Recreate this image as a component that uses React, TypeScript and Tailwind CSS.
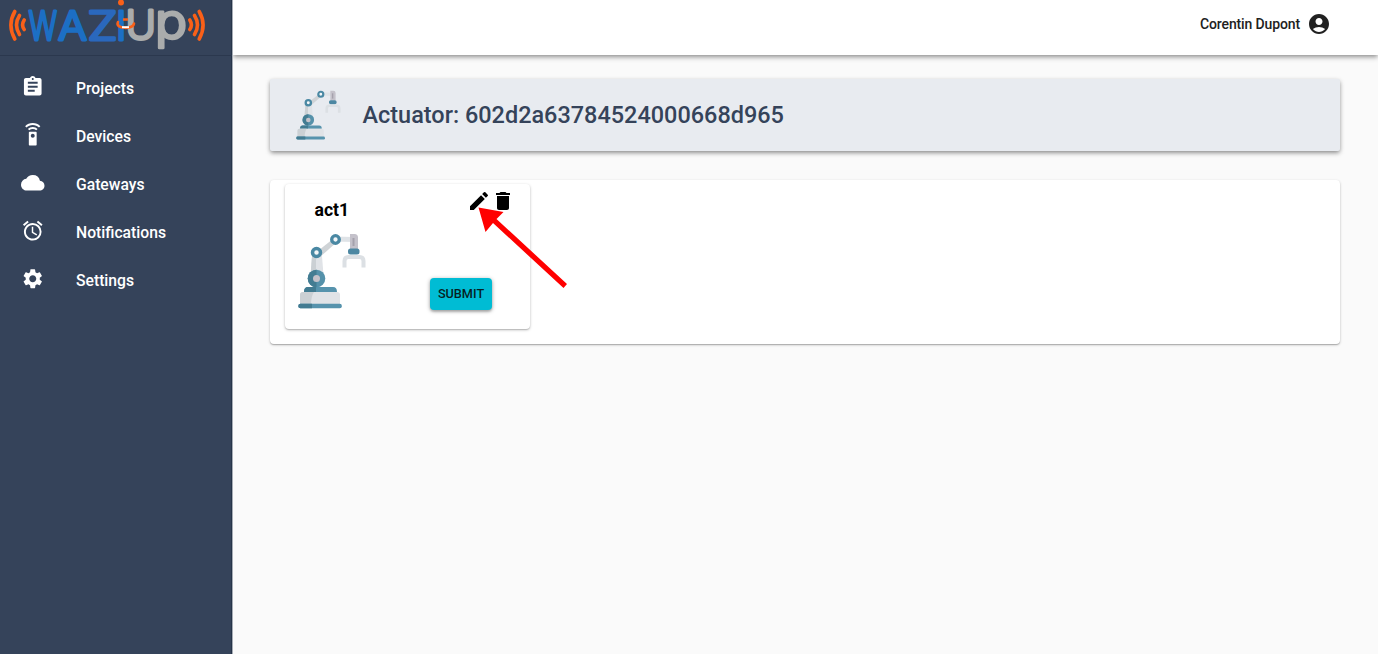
import React from "react";
import {
  MdAccessAlarm,
  MdAccountCircle,
  MdAssignment,
  MdCloud,
  MdDelete,
  MdEdit,
  MdSettings,
  MdSettingsRemote,
} from "react-icons/md";

const navItems = [
  { label: "Projects", Icon: MdAssignment },
  { label: "Devices", Icon: MdSettingsRemote },
  { label: "Gateways", Icon: MdCloud },
  { label: "Notifications", Icon: MdAccessAlarm },
  { label: "Settings", Icon: MdSettings },
];

function Logo() {
  return (
    <svg width="232" height="55" viewBox="0 0 232 55" className="block" role="img" aria-label="Waziup">
      <g fill="none" stroke="#fa6018" strokeWidth="3.6" strokeLinecap="round">
        <path d="M14.8 11.5Q7 25 14.8 39" />
        <path d="M19.5 15.5Q13.5 25 19.5 34.5" />
        <path d="M24.2 20Q21 25 24.2 29.5" />
        <path d="M199.2 11.5Q207 25 199.2 39" />
        <path d="M194.5 15.5Q200.5 25 194.5 34.5" />
        <path d="M189.8 20Q193 25 189.8 29.5" />
      </g>
      <g
        fontFamily="Inter, 'Liberation Sans', sans-serif"
        fontWeight="300"
        strokeWidth="2.8"
        strokeLinejoin="round"
      >
        <g fill="#1c6fc4" stroke="#1c6fc4">
          <text x="28.5" y="39.6" fontSize="39.5" textLength="28.5" lengthAdjust="spacingAndGlyphs">W</text>
          <text x="58" y="39.6" fontSize="39.5" textLength="29" lengthAdjust="spacingAndGlyphs">A</text>
          <text x="87.5" y="39.6" fontSize="39.5" fill="#2a68bd" stroke="#2a68bd" textLength="30" lengthAdjust="spacingAndGlyphs">Z</text>
          <text x="116" y="39.6" fontSize="39.5">I</text>
        </g>
        <g fill="#aaacac" stroke="#aaacac">
          <text x="125.5" y="39.4" fontSize="39.5" textLength="30.5" lengthAdjust="spacingAndGlyphs">U</text>
          <text x="155" y="37.6" fontSize="47" textLength="32" lengthAdjust="spacingAndGlyphs">p</text>
        </g>
      </g>
      <circle cx="121" cy="2.5" r="3" fill="#fa6018" />
      <path d="M118 22C114.500 29 133 30 134 23.5" fill="none" stroke="#fa6018" strokeWidth="2.6" strokeLinecap="round" />
      <path d="M123 19.5h5" stroke="#fa6018" strokeWidth="2.5" />
      <path d="M122 27.2h7" stroke="#fff" strokeWidth="2" />
    </svg>
  );
}

function RobotArm({ className }: { className: string }) {
  return (
    <svg viewBox="0 0 68 76" className={className} aria-hidden="true">
      <path d="M16 21L35 6L39 9L22 24Z" fill="#cfd3d6" />
      <path d="M36 3.5L56 4v5L36 8.5Z" fill="#dfe3e7" />
      <path d="M14 23h10l2 26H12Z" fill="#e0e3e7" />
      <path d="M14 23h4v26h-6Z" fill="#cbd0d4" />
      <path d="M52 1h4.500a3.500 3.500 0 0 1 3.500 3.500V16h-8Z" fill="#c4c1ca" />
      <path d="M54.500 5h2v8h-2Z" fill="#a5a1ac" />
      <rect x="50" y="15.5" width="11.5" height="6" rx="2.5" fill="#4c87a2" />
      <path d="M46.500 34.500V28q0-4 4-4h11q4 0 4 4v6.500" fill="none" stroke="#dce0e4" strokeWidth="4" />
      <circle cx="37.5" cy="6.5" r="3.8" fill="#f4f6f8" stroke="#4a88a3" strokeWidth="3.3" />
      <circle cx="18.5" cy="19.5" r="4" fill="#f4f6f8" stroke="#4a88a3" strokeWidth="3.5" />
      <path d="M6 59q0-5 4-5h25q4 0 4 5Z" fill="#5693ad" />
      <path d="M6 59q0-5 4-5h8v5Z" fill="#427b91" />
      <circle cx="18.5" cy="45.5" r="8.8" fill="#5591aa" />
      <path d="M18.500 36.700a8.800 8.800 0 0 0 0 17.600Z" fill="#437c92" />
      <circle cx="18.5" cy="45.5" r="3.5" fill="#c5c2ca" />
      <path d="M2 72V62q0-3 3-3h34q3 0 3 3v10Z" fill="#e0e3e7" />
      <path d="M2 72V62q0-3 3-3h11q-3 4-3 13Z" fill="#cbd0d4" />
      <rect x="0.3" y="70.8" width="43.5" height="4.4" rx="2" fill="#5693ad" />
      <path d="M2.500 70.800H14v4.400H2.500a2.200 2.200 0 0 1 0-4.400Z" fill="#427b91" />
    </svg>
  );
}

export default function App() {
  return (
    <div className="relative flex h-[654px] w-full overflow-hidden bg-[#fafafa] font-['Roboto',sans-serif] text-black">
      <aside className="z-10 flex w-[233px] shrink-0 flex-col border-r border-[#a6acb5] bg-[#35435a] shadow-[inset_-1px_0_0_#263449]">
        <div className="h-14 border-b border-[#2b384e]">
          <Logo />
        </div>
        <nav className="flex flex-col pt-2">
          {navItems.map(({ label, Icon }) => (
            <a key={label} className="flex h-12 items-center pl-[21px] text-[15.7px] font-medium text-white">
              <Icon className="mb-0.5 size-[23.5px]" />
              <span className="mt-px ml-[31.5px]">{label}</span>
            </a>
          ))}
        </nav>
      </aside>
      <div className="flex min-w-0 flex-1 flex-col">
        <header className="flex h-[55px] shrink-0 items-center justify-end bg-white pr-[47px] pb-[7px] shadow-[0_2px_4px_-1px_rgba(0,0,0,0.3),0_3px_5px_rgba(0,0,0,0.2)]">
          <span className="text-sm font-medium tracking-[-0.13px] text-[#212121]">Corentin Dupont</span>
          <MdAccountCircle className="ml-[7px] size-6 text-[#212121]" />
        </header>
        <main className="flex flex-col pt-6 pr-[38px] pl-[37px]">
          <section className="flex h-[72px] items-center rounded-xs bg-[#e8ebf0] pl-[26px] shadow-[0_2px_4px_-1px_rgba(0,0,0,0.3),0_2px_5px_rgba(0,0,0,0.25)]">
            <RobotArm className="h-[50px] w-[45px]" />
            <h1 className="mt-0.5 ml-[21.5px] text-[23.46px] font-medium text-[#35435a]">Actuator: 602d2a63784524000668d965</h1>
          </section>
          <section className="mt-[29px] h-[164px] rounded bg-white pl-[15px] pt-1 shadow-[0_1px_3px_rgba(0,0,0,0.2),0_1px_1px_rgba(0,0,0,0.2)]">
            <article className="flex h-[145px] w-[245px] flex-col rounded bg-white shadow-[0_1px_3px_rgba(0,0,0,0.25),0_1px_1px_rgba(0,0,0,0.12)]">
              <div className="flex h-[49px] justify-between pt-[5px] pr-[15px] pl-[29.5px]">
                <h2 className="pt-[7px] text-[17.6px] leading-7 font-bold">act1</h2>
                <div className="flex">
                  <MdEdit className="size-6" />
                  <MdDelete className="size-6" />
                </div>
              </div>
              <div className="flex justify-between pr-[38px] pl-[13px]">
                <RobotArm className="h-[76px] w-[68px]" />
                <button className="mt-[45px] flex h-8 w-[62px] items-center justify-center rounded bg-[#00bcd4] text-[12.7px] font-medium text-[#061f23] shadow-[0_1px_4px_rgba(0,0,0,0.35),0_2px_2px_rgba(0,0,0,0.15)]">
                  SUBMIT
                </button>
              </div>
            </article>
          </section>
        </main>
      </div>
      <svg viewBox="0 0 90 82" className="pointer-events-none absolute top-[206px] left-[477px] z-20 h-[82px] w-[90px]" aria-hidden="true">
        <path d="M1.500 1.500L26.500 6L19.500 13L90 78L86.500 82L16 17L8.500 26Z" fill="#f00" />
      </svg>
    </div>
  );
}
